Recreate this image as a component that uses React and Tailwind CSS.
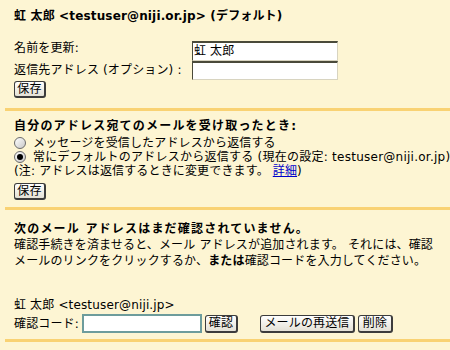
const Btn = ({ children, className = "" }) => (
  <button
    className={
      "flex items-center justify-center whitespace-nowrap h-[17px] px-0 leading-[13px] text-[12px] text-black bg-gradient-to-b from-white to-[#e4e1d6] border border-[#3c3c3c] border-b-[2px] border-r-[2px] rounded-[3px] shrink-0 " +
      className
    }
  >
    {children}
  </button>
);

const Sep = () => <div className="ml-[5px] h-[3px] bg-[#f9d273]" />;

const Radio = ({ checked }) => (
  <span className="inline-flex w-[12px] h-[12px] rounded-full border border-[#6b6b6b] bg-gradient-to-br from-white to-[#c8c8c8] items-center justify-center shrink-0">
    {checked && <span className="w-[6px] h-[6px] rounded-full bg-black" />}
  </span>
);

export default function App() {
  return (
    <div className="w-[450px] h-[350px] overflow-hidden bg-[#fdf5d3] text-black text-[12px] tracking-[0.15px] font-['DejaVu_Sans','Noto_Sans_CJK_JP',sans-serif]">
      {/* section 1 */}
      <div className="pt-[9px] pl-[14px] h-[108px]">
        <div className="font-bold leading-[14px] whitespace-nowrap">
          虹 太郎 &lt;testuser@niji.or.jp&gt; (デフォルト)
        </div>
        <div className="mt-[18px] flex">
          <div className="w-[178px] leading-[14px]">名前を更新:</div>
          <div className="w-[146px] h-[20px] bg-white border-t-2 border-l border-[#4a4a3a] border-b border-b-[#d8d4c0] border-r border-r-[#d8d4c0] leading-[16px] pl-[1px]">
            虹 太郎
          </div>
        </div>
        <div className="flex">
          <div className="w-[178px] leading-[14px] pt-[2px] whitespace-nowrap">返信先アドレス (オプション) :</div>
          <div className="w-[146px] h-[19px] bg-white border-t-2 border-l border-[#4a4a3a] border-b border-b-[#d8d4c0] border-r border-r-[#d8d4c0]" />
        </div>
        <Btn className="mt-[1px] w-[32px]">保存</Btn>
      </div>
      <Sep />
      {/* section 2 */}
      <div className="pt-[8px] pl-[14px] h-[96px]">
        <div className="font-bold leading-[14px] whitespace-nowrap tracking-[1.2px]">自分のアドレス宛てのメールを受け取ったとき:</div>
        <div className="mt-[3px] flex items-center gap-[7px] leading-[14px] whitespace-nowrap">
          <Radio />
          <span>メッセージを受信したアドレスから返信する</span>
        </div>
        <div className="flex items-center gap-[7px] leading-[14px] whitespace-nowrap">
          <Radio checked />
          <span className="tracking-[0.25px]">常にデフォルトのアドレスから返信する (現在の設定: testuser@niji.or.jp)</span>
        </div>
        <div className="leading-[15px] whitespace-nowrap">
          (注: アドレスは返信するときに変更できます。 <a className="text-[#0000cc] underline">詳細</a>)
        </div>
        <Btn className="mt-[4px] w-[32px]">保存</Btn>
      </div>
      <Sep />
      {/* section 3 */}
      <div className="pt-[11px] pl-[14px] h-[129px]">
        <div className="font-bold leading-[16px] whitespace-nowrap tracking-[1.2px]">次のメール アドレスはまだ確認されていません。</div>
        <div className="leading-[16px] whitespace-nowrap">
          確認手続きを済ませると、メール アドレスが追加されます。 それには、確認
        </div>
        <div className="leading-[16px] whitespace-nowrap">
          メールのリンクをクリックするか、<b>または</b>確認コードを入力してください。
        </div>
        <div className="mt-[29px] leading-[14px] whitespace-nowrap">虹 太郎 &lt;testuser@niji.jp&gt;</div>
        <div className="mt-[2px] flex items-center">
          <span className="w-[68px] whitespace-nowrap">確認コード:</span>
          <div className="w-[120px] h-[19px] bg-white border-2 border-[#6d9c9c]" />
          <Btn className="ml-[3px] h-[18px] w-[33px]">確認</Btn>
          <Btn className="ml-[22px] h-[18px] w-[95px]">メールの再送信</Btn>
          <Btn className="ml-[3px] h-[18px] w-[35px]">削除</Btn>
        </div>
      </div>
      <Sep />
    </div>
  );
}
